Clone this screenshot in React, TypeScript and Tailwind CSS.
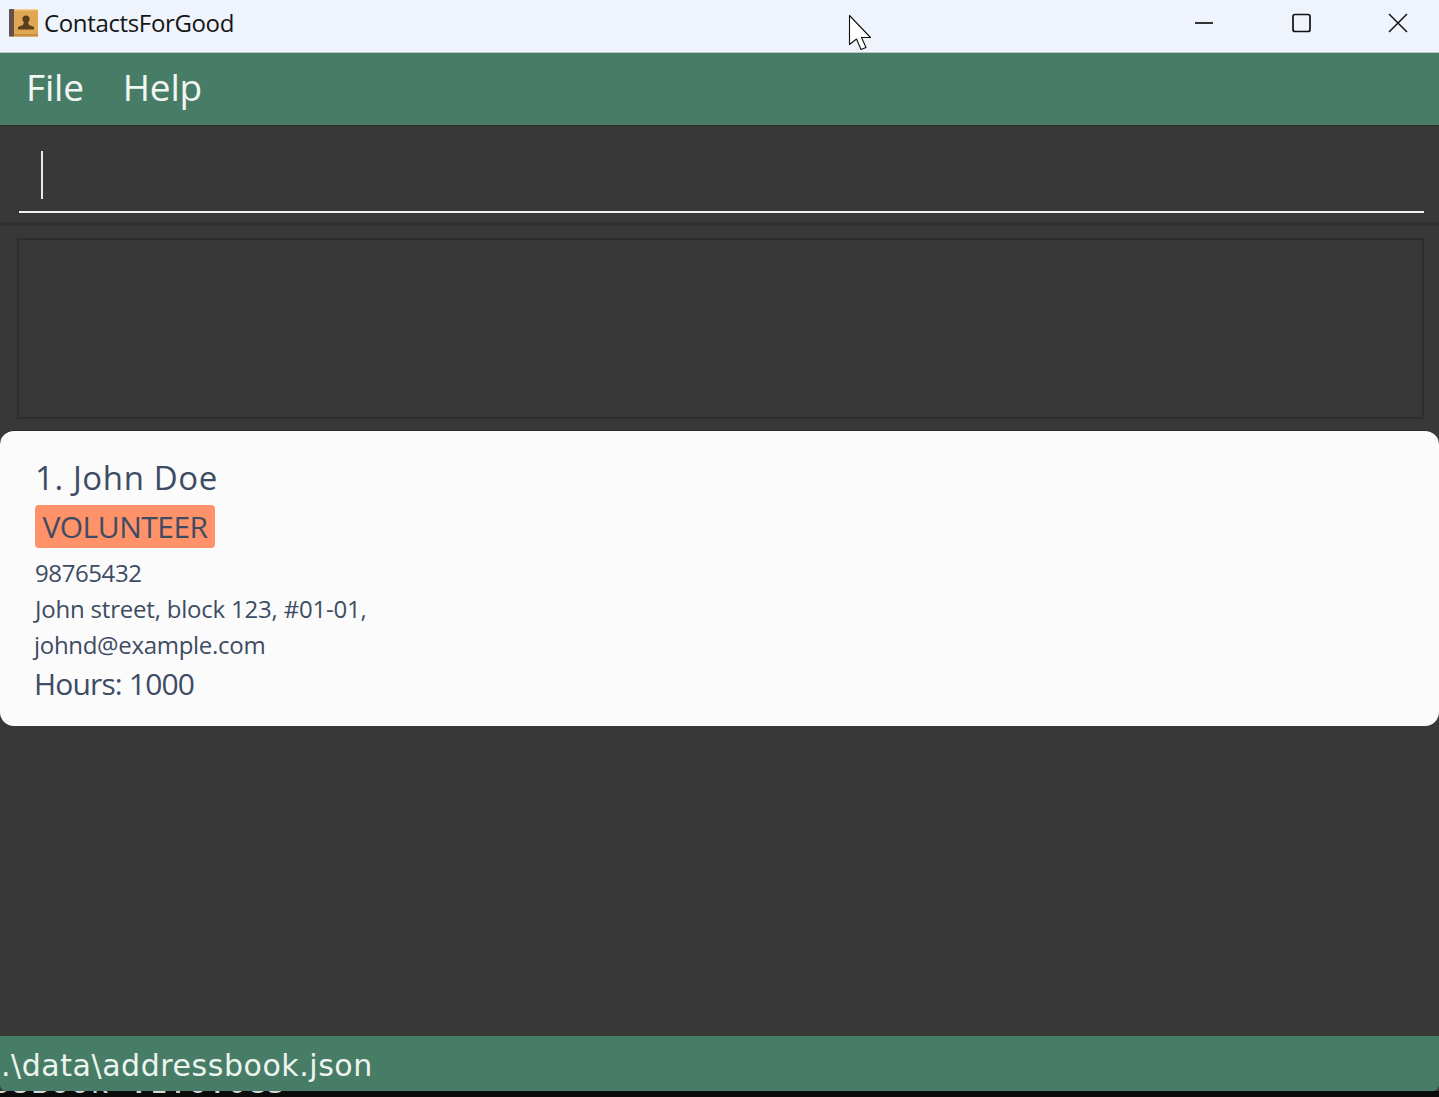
function AppIcon() {
  return (
    <svg width="29" height="28" viewBox="0 0 29 28" aria-hidden="true">
      <rect x="0" y="0" width="29" height="27.5" rx="1" fill="#dfa653" />
      <rect x="0" y="0" width="5" height="27.5" fill="#64524a" />
      <rect x="5" y="0" width="24" height="1.5" fill="#f3cd87" />
      <rect x="5" y="25" width="24" height="2.5" fill="#c78f42" />
      <circle cx="17" cy="10" r="3.6" fill="#5a3d1b" />
      <path d="M15 13h4l1 3 5 2v2.5H9V18l5-2z" fill="#5a3d1b" />
    </svg>
  );
}

function CursorIcon() {
  return (
    <svg width="26" height="38" viewBox="0 0 26 38" aria-hidden="true">
      <path d="M1.5 1.5V30.5L8.5 25L13 35.5L18 33.5L13.5 23.5H22.5Z" fill="#fff" stroke="#111" strokeWidth="1.1" strokeLinejoin="round" />
    </svg>
  );
}

export default function App() {
  return (
    <div className="relative h-[1097px] w-full overflow-hidden bg-[#383838] font-['Open_Sans',sans-serif]">
      {/* title bar */}
      <header className="flex h-[52px] items-center bg-[#eff3fb] pb-[6px] pl-[9px]">
        <AppIcon />
        <span className="ml-[6px] text-[24px] leading-none tracking-[-0.35px] text-[#151515]">ContactsForGood</span>
        <div className="ml-auto flex items-center gap-[77px] pr-[31px]">
          <svg width="20" height="20" viewBox="0 0 20 20" fill="none" stroke="#111" aria-hidden="true">
            <path d="M1 10h18" strokeWidth="1.7" />
          </svg>
          <svg width="20" height="20" viewBox="0 0 20 20" fill="none" stroke="#111" aria-hidden="true">
            <rect x="2" y="1.5" width="17" height="17" rx="2" strokeWidth="1.7" />
          </svg>
          <svg width="20" height="20" viewBox="0 0 20 20" fill="none" stroke="#111" aria-hidden="true">
            <path d="M1 1l18 18M19 1L1 19" strokeWidth="1.5" />
          </svg>
        </div>
      </header>
      <div className="absolute left-[848px] top-[14px]">
        <CursorIcon />
      </div>

      {/* menu bar */}
      <nav className="flex h-[73px] items-center gap-[39px] border-t border-white/60 bg-[#477d66] pb-[6px] pl-[26px] text-[37px] leading-none tracking-[-0.2px] text-[#f1f6f3]">
        <span>File</span>
        <span>Help</span>
      </nav>

      {/* command box */}
      <section className="h-[97px] border-t border-[#2c2c2c] pl-[19px] pt-[25px]">
        <div className="h-[62px] w-[1405px] border-b-2 border-[#f2f2f2] pl-[22px]">
          <div className="h-[48px] w-[2px] bg-[#e8e8e8]" />
        </div>
      </section>

      {/* result display */}
      <section className="border-t-4 border-[#303030] px-[17px] pt-[12px]">
        <div className="h-[181px] w-[1407px] border-2 border-[#2d2d2d]" />
      </section>

      {/* person list */}
      <section className="mt-[11px] h-[296px] rounded-[14px] border-t border-[#2a2a2a] bg-[#fbfbfb] pl-[35px] pt-[27px] text-[#3d4c63]">
        <div className="text-[33px] leading-[40px] tracking-[0.6px]">1. John Doe</div>
        <div className="mt-[7px] flex h-[43px] w-[180px] items-center justify-center rounded-[4px] bg-[#ff9268] text-[30px] leading-none tracking-[-0.5px]">
          VOLUNTEER
        </div>
        <div className="mt-[7px] text-[24px] leading-[36px] tracking-[-0.4px]">98765432</div>
        <div className="text-[24px] leading-[36px] tracking-[-0.2px]">John street, block 123, #01-01,</div>
        <div className="-ml-px text-[24px] leading-[36px] tracking-[-0.3px]">johnd@example.com</div>
        <div className="-ml-px mt-[1px] text-[30px] leading-[40px] tracking-[-0.85px]">Hours: 1000</div>
      </section>

      <div className="h-[310px]" />

      {/* status bar */}
      <footer className="flex h-[55px] items-center rounded-b-[6px] bg-[#477d66] pl-px pt-[5px] font-['DejaVu_Sans',sans-serif] text-[30px] leading-none tracking-[0.55px] text-[#eef4f0]">
        .\data\addressbook.json
      </footer>
      <div className="h-[7px] overflow-hidden bg-[#0c0c0c] font-['DejaVu_Sans_Mono',monospace] text-[30px] leading-[12px] tracking-[1.6px] whitespace-nowrap text-[#d8d8d8]">
        <span className="relative -top-[14px] -ml-[8px]">ssBook V1.6.0e3</span>
      </div>
    </div>
  );
}
